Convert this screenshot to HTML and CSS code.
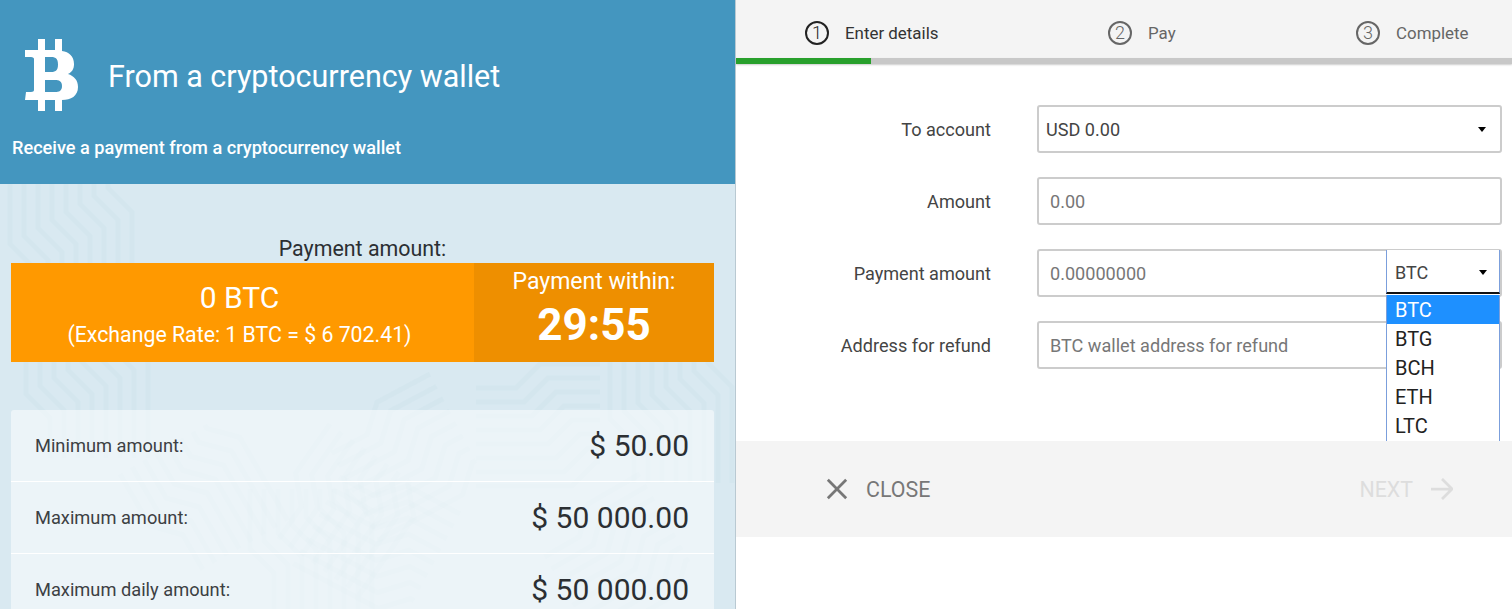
FILE: index.html
```html
<!DOCTYPE html>
<html lang="en">
<head>
<meta charset="utf-8">
<title>From a cryptocurrency wallet</title>
<link rel="stylesheet" href="styles.css">
</head>
<body>
<div class="page">
  <aside class="info">
    <header class="info-head">
      <div class="info-title">
        <svg class="btc-logo" viewBox="0 0 53 72"><path fill-rule="evenodd" d="M13 0h7v11h10V0h7v12c7 1 12 5 12 13 0 5-2 8-6 10 6 2 10 6 10 13 0 9-7 13-16 13v11h-7V61H20v11h-7V61H0l1-8h5c2 0 3-1 3-2V20c0-1-1-2-3-2H0v-7h13zM20 18v15h6c4 0 7-1 7-7.500S30 18 26 18zM20 41v12h10c4 0 7-1 7-6s-3-6-7-6z"/></svg>
        <h1>From a cryptocurrency wallet</h1>
      </div>
      <p class="info-sub">Receive a payment from a cryptocurrency wallet</p>
    </header>
    <div class="info-body">
      <div class="pay-label">Payment amount:</div>
      <div class="pay-box">
        <div class="pay-main">
          <div class="pay-amount">0 BTC</div>
          <div class="pay-rate">(Exchange Rate: 1 BTC = $ 6 702.41)</div>
        </div>
        <div class="pay-timer">
          <div class="timer-label">Payment within:</div>
          <div class="timer-value">29:55</div>
        </div>
      </div>
      <div class="limits">
        <div class="limit"><span class="limit-name">Minimum amount:</span><span class="limit-value">$ 50.00</span></div>
        <div class="limit"><span class="limit-name">Maximum amount:</span><span class="limit-value">$ 50 000.00</span></div>
        <div class="limit"><span class="limit-name">Maximum daily amount:</span><span class="limit-value">$ 50 000.00</span></div>
      </div>
    </div>
  </aside>
  <main class="wizard">
    <nav class="steps">
      <div class="step step-active"><span class="step-num">1</span><span>Enter details</span></div>
      <div class="step"><span class="step-num">2</span><span>Pay</span></div>
      <div class="step"><span class="step-num">3</span><span>Complete</span></div>
    </nav>
    <div class="progress"><div class="progress-fill"></div></div>
    <form class="form">
      <div class="row">
        <label class="row-label">To account</label>
        <div class="field field-select"><span>USD 0.00</span><i class="caret"></i></div>
      </div>
      <div class="row">
        <label class="row-label">Amount</label>
        <div class="field"><span class="ph">0.00</span></div>
      </div>
      <div class="row">
        <label class="row-label">Payment amount</label>
        <div class="field field-split">
          <span class="ph">0.00000000</span>
          <div class="currency">
            <div class="currency-current"><span>BTC</span><i class="caret"></i></div>
            <ul class="currency-list">
              <li class="is-selected">BTC</li>
              <li>BTG</li>
              <li>BCH</li>
              <li>ETH</li>
              <li>LTC</li>
            </ul>
          </div>
        </div>
      </div>
      <div class="row">
        <label class="row-label">Address for refund</label>
        <div class="field"><span class="ph">BTC wallet address for refund</span></div>
      </div>
    </form>
    <footer class="actions">
      <div class="action">
        <svg class="action-icon" viewBox="0 0 24 24"><path d="M2 2l20 20M22 2L2 22"/></svg>
        <span>CLOSE</span>
      </div>
      <div class="action action-off">
        <span>NEXT</span>
        <svg class="action-icon" viewBox="0 0 24 24"><path d="M0 12h22M12 1l11 11-11 11"/></svg>
      </div>
    </footer>
  </main>
</div>
</body>
</html>
```
FILE: styles.css
```css
* { box-sizing: border-box; }
html, body { margin: 0; height: 100%; overflow: hidden; background: #fff; }
body { font-family: Roboto, "Liberation Sans", sans-serif; color: #2b2f33; }
.page { display: flex; height: 609px; overflow: hidden; }

.info { flex: 0 0 736px; display: flex; flex-direction: column; border-right: 1px solid #b9c9d2; background-color: #d9e9f1; }
.info-head { flex: none; height: 184px; background: #4496bf; color: #fff; padding: 39px 12px 0; }
.info-title { display: flex; align-items: center; padding-left: 13px; }
.btc-logo { width: 53px; height: 72px; fill: #fff; flex: none; }
.info-title h1 { margin: 4px 0 0 30px; font-size: 30.5px; font-weight: 400; line-height: 40px; }
.info-sub { margin: 26px 0 0; font-size: 18.15px; font-weight: 500; line-height: 22px; }

.info-body {
  flex: 1; padding: 52px 21px 0 11px;
  background-repeat: no-repeat;
  background-image: url("data:image/svg+xml,%3Csvg xmlns='http://www.w3.org/2000/svg' xmlns:xlink='http://www.w3.org/1999/xlink' width='736' height='425' fill='none' stroke='%23c4dbe7' stroke-opacity='.2' stroke-width='5'%3E%3Cdefs%3E%3Cg id='f'%3E%3Cpath d='M0 0v60l24 24v40'/%3E%3Cpath d='M14 0v52l24 24v48'/%3E%3Cpath d='M28 0v44l24 24v56'/%3E%3Cpath d='M42 0v36l24 24v64'/%3E%3Cpath d='M56 0v28l24 24v72'/%3E%3Cpath d='M70 0v20l24 24v80'/%3E%3Cpath d='M84 0v12l24 24v88'/%3E%3Cpath d='M98 0v4l24 24v96'/%3E%3C/g%3E%3C/defs%3E%3Cuse xlink:href='%23f' x='10'/%3E%3Cuse xlink:href='%23f' x='26' y='150'/%3E%3Cuse xlink:href='%23f' x='610' y='175'/%3E%3Cuse xlink:href='%23f' transform='translate(600 180) rotate(90)'/%3E%3Cuse xlink:href='%23f' transform='translate(430 190) rotate(62)'/%3E%3Cuse xlink:href='%23f' transform='translate(330 240) rotate(35)'/%3E%3Cuse xlink:href='%23f' transform='translate(640 290) rotate(60)'/%3E%3Cuse xlink:href='%23f' transform='translate(120 290) rotate(-30)'/%3E%3Cuse xlink:href='%23f' transform='translate(460 330) rotate(118)'/%3E%3Cuse xlink:href='%23f' x='250' y='305'/%3E%3C/svg%3E");
}
.pay-label { text-align: center; font-size: 21.4px; line-height: 25px; margin-bottom: 2px; }
.pay-box { display: flex; height: 99px; color: #fff; text-align: center; }
.pay-main { width: 463px; background: #ff9900; padding: 17px 6px 0 0; }
.pay-amount { font-size: 30px; line-height: 36px; }
.pay-rate { font-size: 21.3px; line-height: 26px; margin-top: 6px; }
.pay-timer { flex: 1; background: #ee8f00; padding-top: 5px; }
.timer-label { font-size: 23px; line-height: 28px; }
.timer-value { font-size: 44px; font-weight: 700; line-height: 56px; margin-top: 1px; }

.limits { margin-top: 48px; background: rgba(255,255,255,.5); border-radius: 3px 3px 0 0; }
.limit { display: flex; justify-content: space-between; align-items: center; height: 72px; padding: 0 25px 0 24px; border-bottom: 1px solid #fff; }
.limit-name { font-size: 18.25px; font-weight: 400; color: #3c4043; }
.limit-value { font-size: 30px; font-weight: 400; color: #2b2f33; }

.wizard { flex: 1; min-width: 0; display: flex; flex-direction: column; }
.steps { flex: none; height: 58px; background: #f4f4f4; padding-left: 69px; display: grid; grid-template-columns: 303px 248px auto; align-items: center; color: #666; font-size: 16.9px; padding-top: 7px; }
.step { display: flex; align-items: center; gap: 16px; }
.step-active { color: #333; }
.step-active .step-num { color: #222; }
.step-num { width: 24px; height: 24px; border: 2px solid currentColor; border-radius: 50%; display: flex; align-items: center; justify-content: center; font-size: 18px; font-weight: 300; }
.progress { flex: none; height: 6px; background: #c8c8c8; box-shadow: 0 1px 2px rgba(0,0,0,.2); position: relative; }
.progress-fill { width: 135px; height: 100%; background: #28a02c; }

.form { flex: none; height: 377px; padding-top: 41px; overflow: hidden; }
.row { display: flex; align-items: center; height: 48px; margin-bottom: 24px; }
.row-label { width: 255px; text-align: right; font-size: 18.1px; font-weight: 400; color: #444; }
.field { width: 465px; height: 48px; margin-left: 46px; border: 2px solid #ccc; border-radius: 3px; display: flex; align-items: center; padding-left: 11px; font-size: 18.1px; background: #fff; position: relative; }
.ph { color: #777; }
.field-select { padding: 0 14px 0 7px; justify-content: space-between; color: #444; font-size: 18.1px; }
.caret { width: 0; height: 0; border-left: 4px solid transparent; border-right: 4px solid transparent; border-top: 5px solid #000; flex: none; }

.currency { position: absolute; left: 347px; top: -1px; width: 114px; z-index: 2; background: #fff; }
.currency-current { height: 44px; padding: 3px 12px 0 8px; display: flex; align-items: center; justify-content: space-between; border-left: 1px solid #7b9fdc; border-right: 1px solid #7b9fdc; border-bottom: 2px solid #111; font-size: 18px; color: #444; }
.currency-list { list-style: none; margin: 1px 0 0; padding: 0; border-left: 1px solid #7b9fdc; border-right: 1px solid #7b9fdc; height: 160px; font-size: 20px; color: #222; }
.currency-list li { height: 29px; line-height: 31px; padding-left: 8px; }
.currency-list .is-selected { background: #1e90ff; color: #fff; }

.actions { flex: none; height: 96px; background: #f4f4f4; display: flex; justify-content: space-between; align-items: center; padding: 0 59px 0 90px; font-size: 21.4px; color: #777; position: relative; z-index: 3; }
.action { display: flex; align-items: center; gap: 18px; }
.action-off { color: #ddd; }
.action-icon { width: 22px; height: 22px; fill: none; stroke: currentColor; stroke-width: 3; flex: none; }
```
